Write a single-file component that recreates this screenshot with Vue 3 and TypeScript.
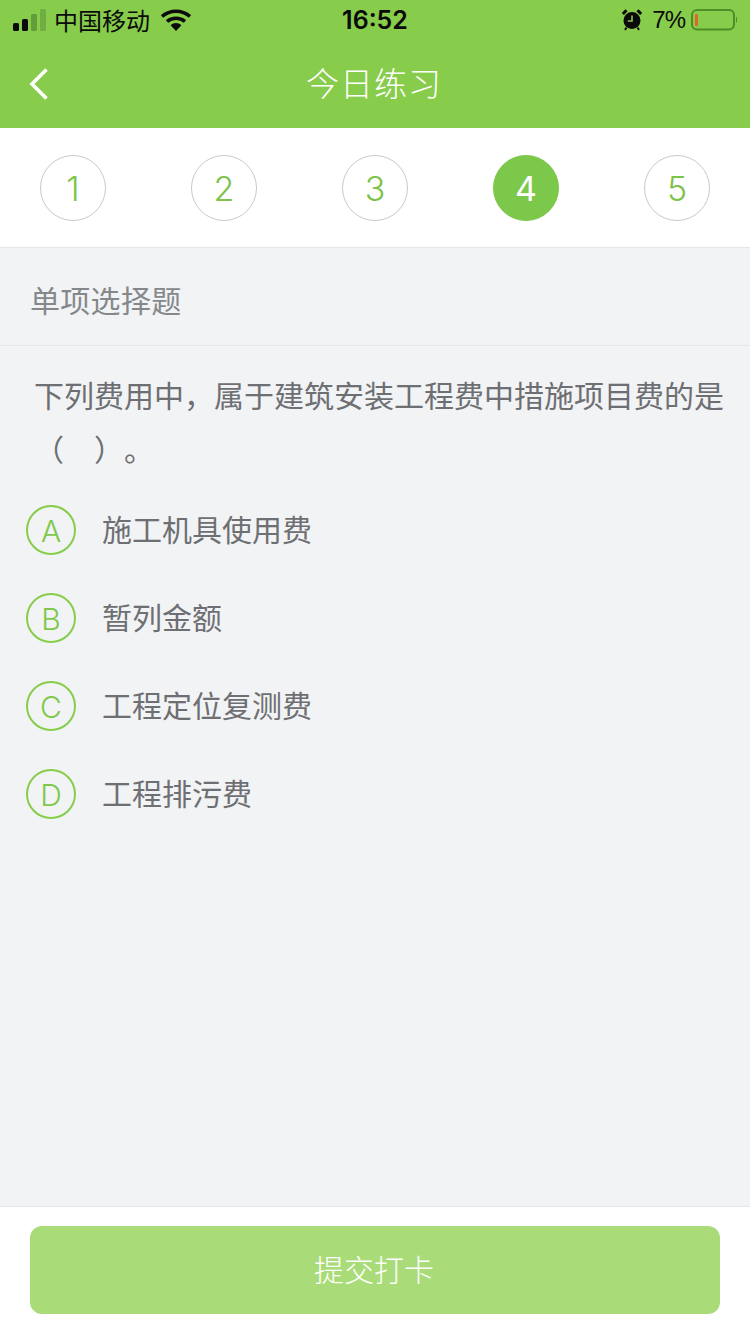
<script setup lang="ts">
const steps: number[] = [1, 2, 3, 4, 5]
const active = 4
const options = [
  { key: 'A', text: '施工机具使用费' },
  { key: 'B', text: '暂列金额' },
  { key: 'C', text: '工程定位复测费' },
  { key: 'D', text: '工程排污费' },
]
</script>

<template>
  <div class="page">
    <header class="top">
      <div class="status">
        <div class="status-left">
          <svg class="signal" width="34" height="22" viewBox="0 0 34 22">
            <rect x="0" y="14" width="6" height="8" rx="1.5" fill="#0a0a0a" />
            <rect x="9" y="10" width="6" height="12" rx="1.5" fill="#0a0a0a" />
            <rect x="18" y="5" width="6" height="17" rx="1.5" fill="#639c3b" />
            <rect x="27" y="0" width="6" height="22" rx="1.5" fill="#71ad45" />
          </svg>
          <span class="carrier">中国移动</span>
          <svg class="wifi" width="30" height="22" viewBox="0 0 30 22">
            <path d="M1 7.5C9 .5 21 .5 29 7.5" fill="none" stroke="#0a0a0a" stroke-width="3.6" />
            <path d="M6 12.5C11 8.2 19 8.2 24 12.5" fill="none" stroke="#0a0a0a" stroke-width="3.6" />
            <path d="M9.6 16.2C12.8 13.400 17.200 13.400 20.400 16.200L15 22Z" fill="#0a0a0a" />
          </svg>
        </div>
        <span class="time">16:52</span>
        <div class="status-right">
          <svg class="alarm" width="20" height="22" viewBox="0 0 20 22">
            <circle cx="10" cy="11.500" r="8.500" fill="#0a0a0a" />
            <path d="M10 6.500v5.500H5.800" fill="none" stroke="#87cc4b" stroke-width="1.600" />
            <path d="M.8 5 4.500 1.200M19.200 5 15.500 1.200" stroke="#0a0a0a" stroke-width="3" />
            <path d="M4.500 18.500 3 21M15.500 18.500 17 21" stroke="#0a0a0a" stroke-width="2" />
          </svg>
          <span class="percent">7%</span>
          <svg width="47" height="24" viewBox="0 0 47 24">
            <rect x="1" y="2" width="42" height="19.500" rx="5" fill="none" stroke="#4f8c2a" stroke-width="2" />
            <rect x="4" y="6" width="3" height="12" rx="1" fill="#e8632c" />
            <path d="M45 8.500c1.500 1 1.500 5.500 0 6.500z" fill="#4f8c2a" />
          </svg>
        </div>
      </div>
      <div class="nav">
        <svg class="back" width="20" height="34" viewBox="0 0 20 34">
          <path d="M17.500 2.500 3 17l14.500 14.500" fill="none" stroke="#fff" stroke-width="3.600" />
        </svg>
        <span class="title">今日练习</span>
      </div>
    </header>

    <nav class="steps">
      <div v-for="n in steps" :key="n" class="step" :class="{ 'step-on': n === active }">{{ n }}</div>
    </nav>

    <main class="body">
      <div class="kind">单项选择题</div>
      <div class="question">下列费用中，属于建筑安装工程费中措施项目费的是<br />（　）。</div>
      <ul class="options">
        <li v-for="o in options" :key="o.key" class="option">
          <span class="letter">{{ o.key }}</span>
          <span class="text">{{ o.text }}</span>
        </li>
      </ul>
    </main>

    <footer class="foot">
      <button class="submit" type="button">提交打卡</button>
    </footer>
  </div>
</template>

<style scoped>
.page {
  width: 750px;
  height: 1334px;
  display: flex;
  flex-direction: column;
  background: #f2f3f5;
  font-family: "Noto Sans CJK SC", "Noto Sans", sans-serif;
  overflow: hidden;
}
.top {
  height: 128px;
  background: #87cc4b;
  flex: none;
}
.status {
  height: 40px;
  display: flex;
  align-items: center;
  justify-content: space-between;
  padding: 0 12px 0 13px;
  position: relative;
  color: #0a0a0a;
}
.status-left,
.status-right {
  display: flex;
  align-items: center;
}
.status-left {
  gap: 8px;
}
.status-right {
  gap: 10px;
}
.carrier {
  font-size: 24px;
  line-height: 40px;
  margin-left: -1px;
}
.wifi {
  margin-left: 3px;
}
.time {
  position: absolute;
  left: 0;
  right: 0;
  text-align: center;
  font-family: "Inter", "Liberation Sans", sans-serif;
  font-size: 25px;
  font-weight: 600;
  line-height: 40px;
}
.percent {
  font-family: "Liberation Sans", sans-serif;
  font-size: 24px;
  letter-spacing: -1px;
  line-height: 40px;
  margin-right: -4px;
}
.nav {
  height: 88px;
  position: relative;
  display: flex;
  align-items: center;
  justify-content: center;
  padding-bottom: 4px;
  box-sizing: border-box;
}
.back {
  position: absolute;
  left: 29px;
  top: 27px;
}
.title {
  color: #fff;
  font-size: 33px;
  font-weight: 300;
  letter-spacing: 1px;
  margin-left: -2px;
}
.steps {
  flex: none;
  height: 120px;
  box-sizing: border-box;
  background: #fff;
  border-bottom: 1px solid #e6e7e9;
  padding: 27px 40px 0;
  display: flex;
  justify-content: space-between;
  align-items: flex-start;
}
.step {
  width: 66px;
  height: 66px;
  box-sizing: border-box;
  border: 1px solid #c9c9c9;
  border-radius: 50%;
  display: flex;
  align-items: center;
  justify-content: center;
  color: #7cc34a;
  font-family: "Inter", "Liberation Sans", sans-serif;
  font-size: 34px;
  font-weight: 300;
}
.step-on {
  background: #7cc84a;
  border-color: #7cc84a;
  color: #fff;
  font-weight: 400;
}
.body {
  flex: 1;
  min-height: 0;
}
.kind {
  height: 98px;
  box-sizing: border-box;
  border-bottom: 1px solid #e6e7e9;
  padding: 4px 30px 0;
  display: flex;
  align-items: center;
  font-size: 30px;
  letter-spacing: 0.3px;
  font-weight: 400;
  color: #85888b;
}
.question {
  padding: 21px 20px 0 34px;
  font-size: 30px;
  line-height: 54px;
  font-weight: 400;
  color: #6d6f72;
  text-spacing-trim: space-all;
}
.options {
  list-style: none;
  margin: 0;
  padding: 30px 0 0 26px;
}
.option {
  height: 88px;
  display: flex;
  align-items: flex-start;
}
.letter {
  width: 50px;
  height: 50px;
  box-sizing: border-box;
  border: 2px solid #86cd4b;
  border-radius: 50%;
  padding-top: 1px;
  display: flex;
  align-items: center;
  justify-content: center;
  color: #7fc84a;
  font-family: "Inter", "Liberation Sans", sans-serif;
  font-size: 30px;
  font-weight: 300;
}
.text {
  margin-left: 26px;
  font-size: 30px;
  line-height: 46px;
  font-weight: 400;
  color: #6d6f72;
}
.foot {
  flex: none;
  height: 128px;
  box-sizing: border-box;
  background: #fff;
  border-top: 1px solid #e6e7e9;
  padding: 19px 30px 0;
}
.submit {
  display: block;
  width: 100%;
  height: 88px;
  border: 0;
  border-radius: 12px;
  background: #a9dc78;
  color: #fff;
  font-family: inherit;
  font-size: 30px;
  font-weight: 300;
  padding: 0 2px 4px 0;
}
</style>
